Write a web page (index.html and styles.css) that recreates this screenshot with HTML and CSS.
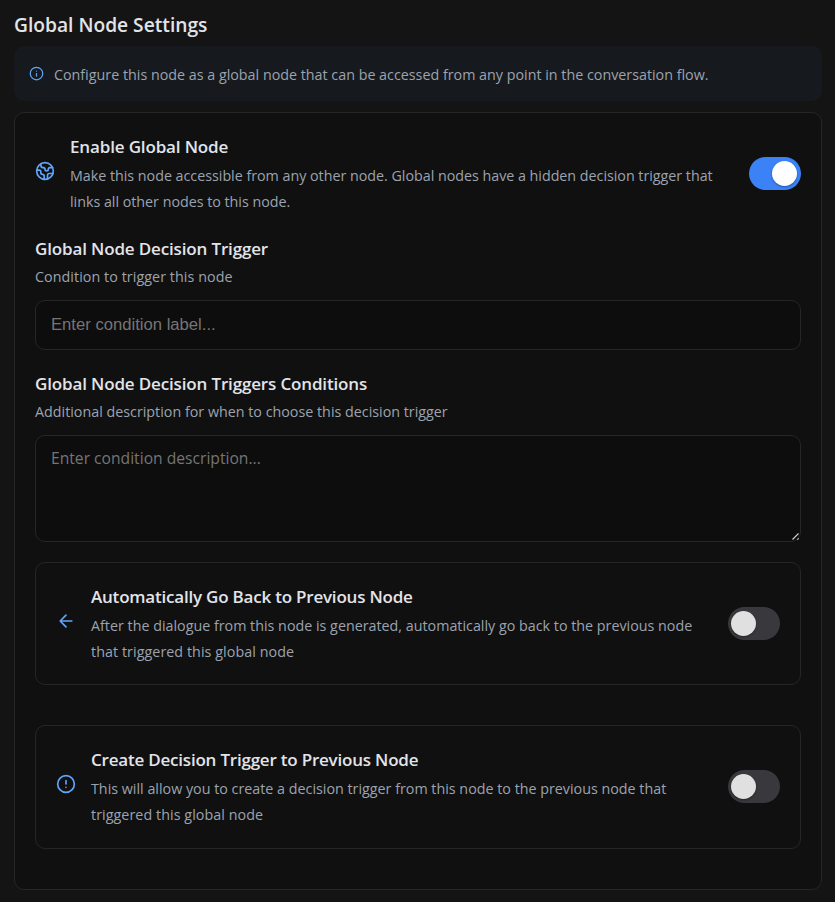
FILE: index.html
```html
<!DOCTYPE html>
<html lang="en">
<head>
<meta charset="utf-8">
<title>Global Node Settings</title>
<link rel="stylesheet" href="styles.css">
</head>
<body>
<main class="page">
  <h1 class="title">Global Node Settings</h1>
  <div class="notice">
    <svg class="icon" width="15" height="15" viewBox="0 0 24 24"><circle cx="12" cy="12" r="10"/><path d="M12 16v-4M12 8h.01"/></svg>
    <p class="text">Configure this node as a global node that can be accessed from any point in the conversation flow.</p>
  </div>
  <section class="card">
    <div class="row row-main">
      <svg class="icon" width="20" height="20" viewBox="0 0 24 24"><path d="M21.54 15H17a2 2 0 0 0-2 2v4.54"/><path d="M7 3.34V5a3 3 0 0 0 3 3a2 2 0 0 1 2 2c0 1.1.9 2 2 2a2 2 0 0 0 2-2c0-1.1.9-2 2-2h3.17"/><path d="M11 21.95V18a2 2 0 0 0-2-2a2 2 0 0 1-2-2v-1a2 2 0 0 0-2-2H2.05"/><circle cx="12" cy="12" r="10"/></svg>
      <div class="copy">
        <h2 class="heading">Enable Global Node</h2>
        <p class="text">Make this node accessible from any other node. Global nodes have a hidden decision trigger that<br>links all other nodes to this node.</p>
      </div>
      <button class="switch on" type="button" role="switch" aria-checked="true"><span class="knob"></span></button>
    </div>

    <div class="field">
      <h2 class="heading">Global Node Decision Trigger</h2>
      <p class="text hint wide">Condition to trigger this node</p>
      <input class="input" type="text" placeholder="Enter condition label...">
    </div>
    <div class="field field-area">
      <h2 class="heading">Global Node Decision Triggers Conditions</h2>
      <p class="text hint">Additional description for when to choose this decision trigger</p>
      <div class="area-wrap">
        <textarea class="input area" placeholder="Enter condition description..."></textarea>
        <svg class="grip" width="9" height="9" viewBox="0 0 9 9"><path d="M1.5 7.5 7.5 1.5M6.3 7.7 7.7 6.3"/></svg>
      </div>
    </div>

    <div class="row option">
      <svg class="icon" width="20" height="20" viewBox="0 0 24 24"><path d="m12 19-7-7 7-7M19 12H5"/></svg>
      <div class="copy">
        <h2 class="heading tight">Automatically Go Back to Previous Node</h2>
        <p class="text">After the dialogue from this node is generated, automatically go back to the previous node<br><span class="wide">that triggered this global node</span></p>
      </div>
      <button class="switch" type="button" role="switch" aria-checked="false"><span class="knob"></span></button>
    </div>
    <div class="row option">
      <svg class="icon" width="20" height="20" viewBox="0 0 24 24"><circle cx="12" cy="12" r="10"/><path d="M12 8v4M12 16h.01"/></svg>
      <div class="copy">
        <h2 class="heading tight">Create Decision Trigger to Previous Node</h2>
        <p class="text">This will allow you to create a decision trigger from this node to the previous node that<br><span class="wide">triggered this global node</span></p>
      </div>
      <button class="switch" type="button" role="switch" aria-checked="false"><span class="knob"></span></button>
    </div>
  </section>
</main>
</body>
</html>
```
FILE: styles.css
```css
* { box-sizing: border-box; }
body {
  margin: 0;
  background: #141414;
  color: #e2e4ea;
  font-family: "Segoe UI", "Open Sans", sans-serif;
  overflow: hidden;
}
h1, h2, p { margin: 0; white-space: nowrap; }
.page { height: 902px; padding: 11px 13px 0 14px; }
.title { height: 35px; font-size: 19.2px; line-height: 28px; font-weight: 600; }
.notice {
  display: flex;
  align-items: center;
  gap: 10px;
  height: 55px;
  padding: 0 15px;
  border-radius: 10px;
  background: #16191d;
}
.notice .text { padding-top: 2px; }
.icon {
  flex: none;
  fill: none;
  stroke: #60a5fa;
  stroke-width: 2;
  stroke-linecap: round;
  stroke-linejoin: round;
}
.text { font-size: 14.3px; line-height: 26px; color: #9ca3af; }
.wide { letter-spacing: 0.06px; }
.card {
  height: 778px;
  margin-top: 10.5px;
  padding: 20px;
  border: 1px solid #262626;
  border-radius: 10px;
  background: #101010;
}
.row { display: flex; align-items: center; }
.copy { flex: 1; margin-left: 15px; }
.copy .heading { margin-bottom: 3px; }
.heading { font-size: 17px; line-height: 26px; font-weight: 600; letter-spacing: -0.15px; }
.tight { letter-spacing: -0.21px; }
.row-main { height: 82px; margin-bottom: 21px; }
.row-main .copy { padding-top: 2px; }
.row-main .text { letter-spacing: -0.02px; }
.row-main .icon { margin-top: -5px; }
.switch {
  flex: none;
  display: flex;
  align-items: center;
  width: 52px;
  height: 33px;
  padding: 0 3px;
  border: 0;
  border-radius: 17px;
  background: #39383d;
}
.switch.on { justify-content: flex-end; padding-right: 4px; background: #3b82f6; }
.knob { width: 25px; height: 25px; border-radius: 50%; background: #e0e0e0; box-shadow: 0 1px 2px rgba(0, 0, 0, .35); }
.on .knob { background: #fff; }
.field { height: 135px; }
.hint { margin-top: 2px; }
.input {
  display: block;
  width: 100%;
  height: 50px;
  margin-top: 10px;
  padding: 0 15px;
  border: 1px solid #262626;
  border-radius: 10px;
  outline: 0;
  background: #0d0d0d;
  color: #e2e4ea;
  font: 16.65px "Liberation Sans", Arial, sans-serif;
}
.input::placeholder { color: #757575; }
.field-area { height: 191px; }
.area-wrap { position: relative; }
.area { height: 107px; padding: 9px 15px; font: 15.65px/26px "Segoe UI", "Open Sans", sans-serif; resize: none; }
.grip { position: absolute; right: 1px; bottom: 1px; fill: none; stroke: #d0d0d0; stroke-width: 1.1; }
.option {
  height: 123px;
  padding: 0 20px;
  border: 1px solid #262626;
  border-radius: 10px;
}
.option .copy { padding-top: 3px; }
.option .icon { margin-top: -5px; }
.option + .option { height: 123.5px; margin-top: 40.5px; }
.option + .option .copy { padding-top: 1.5px; }
```
